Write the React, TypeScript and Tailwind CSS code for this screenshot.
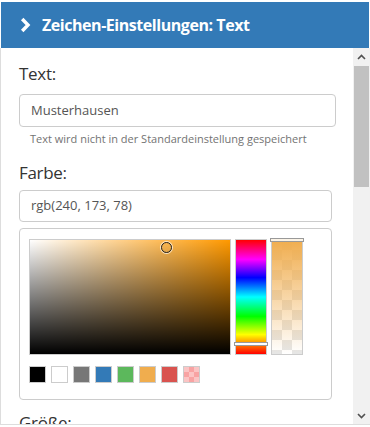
import React from 'react';

const swatches = [
  { c: 'bg-black' },
  { c: 'bg-white' },
  { c: 'bg-[#777777]' },
  { c: 'bg-[#337ab7]' },
  { c: 'bg-[#5cb85c]' },
  { c: 'bg-[#f0ad4e]' },
  { c: 'bg-[#d9534f]' },
];

const checker =
  'bg-[conic-gradient(#e6e6e6_25%,#ffffff_0_50%,#e6e6e6_0_75%,#ffffff_0)] bg-[length:20px_20px]';

export default function App() {
  return (
    <div className="w-[370px] h-[427px] bg-white pt-[2px] font-['Open_Sans','Noto_Sans',sans-serif] overflow-hidden">
      {/* Header */}
      <div className="ml-[1px] mr-[1px] h-[46px] bg-[#337ab7] flex items-center pl-[19px] gap-[11px] text-white">
        <svg width="11" height="16" viewBox="0 0 11 16" className="shrink-0">
          <path d="M2.2 2 L8 8 L2.2 14" fill="none" stroke="white" strokeWidth="3.4" strokeLinejoin="miter" />
        </svg>
        <span className="text-[16px] font-bold tracking-[-0.45px]">Zeichen-Einstellungen: Text</span>
      </div>

      {/* Body */}
      <div className="flex h-[377px] border-l border-b border-[#dddddd]">
        <div className="flex-1 overflow-hidden pl-[18px] pr-[17px]">
          <div className="mt-[14px] text-[17px] leading-[24px] text-[#333333] tracking-[-0.3px]">Text:</div>
          <div className="mt-[8px] h-[33px] border border-[#cccccc] rounded-[4px] flex items-center pl-[11px] text-[13px] text-[#555555]">
            Musterhausen
          </div>
          <div className="mt-[4px] pl-[11px] text-[11px] leading-[16px] text-[#737373]">
            Text wird nicht in der Standardeinstellung gespeichert
          </div>

          <div className="mt-[14px] text-[17px] leading-[24px] text-[#333333] tracking-[-0.3px]">Farbe:</div>
          <div className="mt-[5px] w-[313px] h-[32px] border border-[#cccccc] rounded-[4px] flex items-center pl-[11px] text-[13px] text-[#555555]">
            rgb(240, 173, 78)
          </div>

          {/* Colour picker */}
          <div className="mt-[6px] w-[313px] h-[172px] border border-[#cccccc] rounded-[4px] pt-[10px] pl-[9px]">
            <div className="flex gap-[4px]">
              <div className="relative w-[202px] h-[116px] border border-[#cccccc] bg-[#ff9900]">
                <div className="absolute inset-0 bg-gradient-to-r from-white to-transparent" />
                <div className="absolute inset-0 bg-gradient-to-b from-transparent to-black" />
                <div className="absolute left-[131px] top-[2px] w-[11px] h-[11px] rounded-full border-[1.5px] border-[#222222] ring-1 ring-white/70" />
              </div>
              <div className="relative w-[32px] h-[116px] border border-[#cccccc] bg-[linear-gradient(to_bottom,#ff0000_0%,#ff00ff_17%,#0000ff_33%,#00ffff_50%,#00ff00_67%,#ffff00_83%,#ff0000_100%)]">
                <div className="absolute left-[-2px] right-[-2px] top-[102px] h-[4px] bg-white border border-[#999999]" />
              </div>
              <div className={`relative w-[32px] h-[116px] border border-[#cccccc] ${checker}`}>
                <div className="absolute inset-0 bg-gradient-to-b from-[#f0ad4e] to-[#f0ad4e]/0" />
                <div className="absolute left-[-2px] right-[-2px] top-[-2px] h-[4px] bg-[#fbf3e6] border border-[#999999]" />
              </div>
            </div>
            <div className="mt-[11px] flex gap-[5px]">
              {swatches.map((s, i) => (
                <div key={i} className={`w-[17px] h-[17px] border border-[#cccccc] ${s.c}`} />
              ))}
              <div className="w-[17px] h-[17px] border border-[#cccccc] bg-[conic-gradient(#f8a3a3_25%,#fbc4c4_0_50%,#f8a3a3_0_75%,#fbc4c4_0)] bg-[length:10px_10px]" />
            </div>
          </div>

          <div className="mt-[11px] text-[17px] leading-[24px] text-[#333333] tracking-[-0.3px]">Größe:</div>
        </div>

        {/* Scrollbar */}
        <div className="w-[17px] bg-[#f1f1f1] flex flex-col">
          <div className="h-[17px] flex items-center justify-center">
            <svg width="9" height="6" viewBox="0 0 9 6">
              <path d="M1 5 L4.5 1.5 L8 5" fill="none" stroke="#505050" strokeWidth="1.6" />
            </svg>
          </div>
          <div className="mx-[1px] mt-[1px] h-[121px] bg-[#c1c1c1]" />
          <div className="flex-1" />
          <div className="h-[17px] flex items-center justify-center">
            <svg width="9" height="6" viewBox="0 0 9 6">
              <path d="M1 1 L4.5 4.5 L8 1" fill="none" stroke="#505050" strokeWidth="1.6" />
            </svg>
          </div>
        </div>
      </div>
    </div>
  );
}
